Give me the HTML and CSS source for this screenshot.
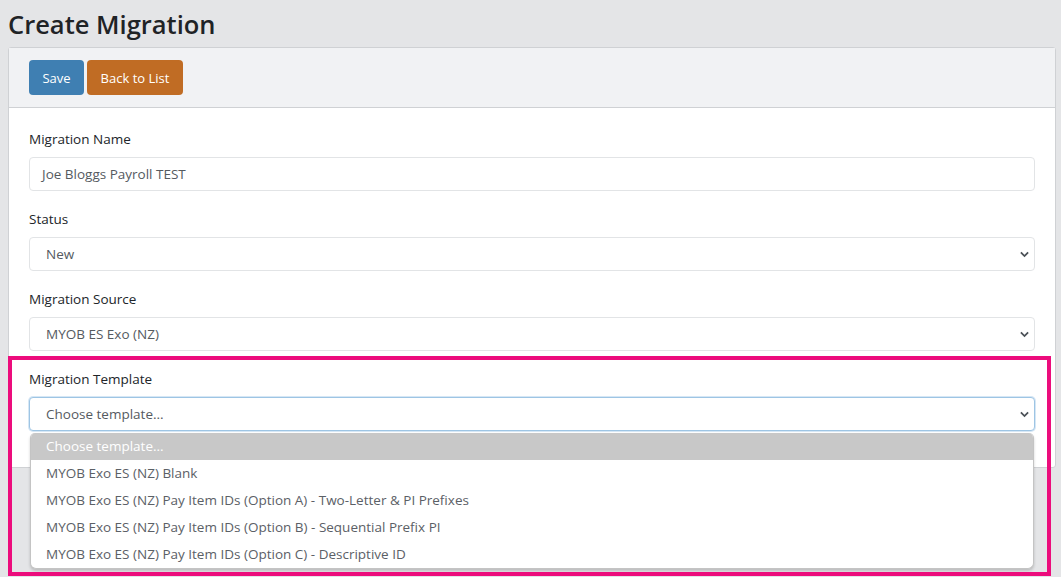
FILE: index.html
```html
<!DOCTYPE html>
<html>
<head>
<meta charset="utf-8">
<link rel="stylesheet" href="styles.css">
</head>
<body>
<div class="page">
  <h1 class="title">Create Migration</h1>
  <div class="card">
    <div class="card-header">
      <button class="btn btn-save">Save</button>
      <button class="btn btn-back">Back to List</button>
    </div>
    <div class="card-body">
      <div class="group">
        <label class="label">Migration Name</label>
        <div class="input">Joe Bloggs Payroll TEST</div>
      </div>
      <div class="group">
        <label class="label">Status</label>
        <div class="select">New
          <svg class="chev" viewBox="0 0 10 7" width="9" height="7"><path d="M1 1.2 L5 5.2 L9 1.2" fill="none" stroke="#4b5157" stroke-width="2"/></svg>
        </div>
      </div>
      <div class="group">
        <label class="label">Migration Source</label>
        <div class="select">MYOB ES Exo (NZ)
          <svg class="chev" viewBox="0 0 10 7" width="9" height="7"><path d="M1 1.2 L5 5.2 L9 1.2" fill="none" stroke="#4b5157" stroke-width="2"/></svg>
        </div>
      </div>
      <div class="group">
        <label class="label">Migration Template</label>
        <div class="select focus">Choose template...
          <svg class="chev" viewBox="0 0 10 7" width="9" height="7"><path d="M1 1.2 L5 5.2 L9 1.2" fill="none" stroke="#4b5157" stroke-width="2"/></svg>
          <ul class="menu">
            <li class="sel">Choose template...</li>
            <li>MYOB Exo ES (NZ) Blank</li>
            <li>MYOB Exo ES (NZ) Pay Item IDs (Option A) - Two-Letter &amp; PI Prefixes</li>
            <li>MYOB Exo ES (NZ) Pay Item IDs (Option B) - Sequential Prefix PI</li>
            <li>MYOB Exo ES (NZ) Pay Item IDs (Option C) - Descriptive ID</li>
          </ul>
        </div>
      </div>
    </div>
  </div>
  <div class="highlight"></div>
</div>
</body>
</html>
```

FILE: styles.css
```css
* { box-sizing: border-box; }
html, body { margin: 0; padding: 0; }
body {
  background: #e4e5e7;
  font-family: "Open Sans", "Noto Sans", sans-serif;
  color: #212529;
  width: 1061px;
  height: 577px;
  overflow: hidden;
}
.page {
  position: relative;
  padding: 0 5px 0 8px;
}
.title {
  margin: 0;
  padding-top: 6px;
  height: 47px;
  font-size: 25.5px;
  font-weight: 600;
  line-height: 36px;
  color: #1f2326;
}
.card {
  background: #fff;
  border: 1px solid #cfd1d4;
  border-radius: 3px;
}
.card-header {
  background: #f1f2f4;
  border-bottom: 1px solid #cfd1d4;
  padding: 12px 20px 12px;
  display: flex;
  gap: 3px;
}
.btn {
  height: 35px;
  border: none;
  border-radius: 4px;
  color: #fff;
  font-family: inherit;
  font-size: 13px;
  padding: 0;
  cursor: pointer;
}
.btn-save { background: #3f7fb2; width: 55px; }
.btn-back { background: #c06c24; width: 96px; }
.card-body {
  padding: 20px 20px 19px;
}
.group {
  margin-bottom: 17px;
  display: flex;
  flex-direction: column;
}
.label {
  font-size: 13.5px;
  line-height: 22px;
  margin-bottom: 7px;
  color: #212529;
}
.input, .select {
  position: relative;
  height: 34px;
  border: 1px solid #e2e4e6;
  border-radius: 4px;
  font-size: 13.5px;
  line-height: 32px;
  color: #555a5f;
  background: #fff;
}
.input { padding-left: 12px; }
.select { padding-left: 16px; }
.select.focus {
  border-color: #9ec5e4;
  box-shadow: 0 0 0 1px #d6e7f5;
}
.chev {
  position: absolute;
  right: 5px;
  top: 13px;
}
.menu {
  position: absolute;
  left: 0;
  right: 0;
  top: 35px;
  margin: 0;
  padding: 0;
  list-style: none;
  background: #fff;
  border: 1px solid #c4c4c4;
  border-top: none;
  border-radius: 5px 5px 6px 6px;
  box-shadow: 0 2px 3px rgba(0,0,0,0.18);
  z-index: 5;
  overflow: hidden;
}
.menu li {
  height: 27px;
  line-height: 27px;
  padding-left: 15px;
  font-size: 13.5px;
  color: #5b6066;
}
.menu li.sel {
  background: #c8c8c8;
  color: #fff;
}
.highlight {
  position: absolute;
  left: 8px;
  top: 356px;
  width: 1043px;
  height: 220px;
  border: 4px solid #ec0c7c;
  pointer-events: none;
  z-index: 10;
}
```
